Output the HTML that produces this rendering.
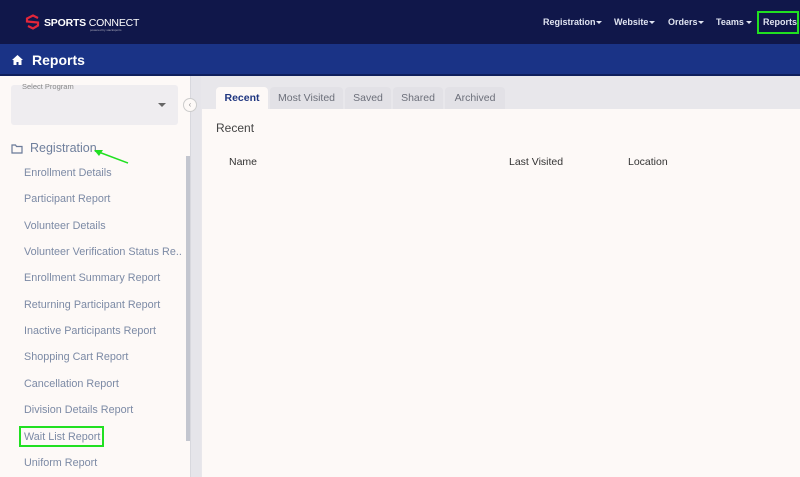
<!DOCTYPE html>
<html><head><style>
*{margin:0;padding:0;box-sizing:border-box}
body{width:800px;height:477px;overflow:hidden;font-family:"Liberation Sans",sans-serif;background:#e8e7eb;position:relative}
.top{position:absolute;left:0;top:0;width:800px;height:44px;background:#10174a}
.nav{position:absolute;top:17px;color:#dfe3f0;font-size:9px;font-weight:bold}
.car{position:absolute;top:21px;border:3px solid transparent;border-top:3px solid #dfe3f0;border-bottom:0}
.bar{position:absolute;left:0;top:44px;width:800px;height:32px;background:#1a3386;border-bottom:2px solid #0f1f5c}
.side{position:absolute;left:0;top:76px;width:190px;height:401px;background:#fdf9f7}
.item{position:absolute;left:24px;font-size:10.8px;color:#7c8aa5;white-space:nowrap}
.tab{position:absolute;top:87px;height:22px;background:#e2e1e6;border-radius:4px 4px 0 0;font-size:10.5px;color:#6c6f7a;text-align:center;line-height:22px}
.card{position:absolute;left:202px;top:109px;width:598px;height:368px;background:#fdf9f7}
.h{position:absolute;font-size:10.5px;color:#333}
</style></head><body>
<div class="top">
<svg style="position:absolute;left:25px;top:14px" width="16" height="16" viewBox="0 0 16 16"><path d="M13 4 L8 1.5 L2 4.5 L2 7.5 L13 8.5 L13 11.5 L8 14.5 L3 12" fill="none" stroke="#e3263a" stroke-width="2.2"/></svg>
<div style="position:absolute;left:44px;top:17px;color:#fff;font-size:10.5px;font-weight:bold;letter-spacing:-0.2px">SPORTS <span style="font-weight:normal">CONNECT</span></div>
<div style="position:absolute;left:90px;top:28px;color:#aab;font-size:3px">powered by stacksports</div>
<div class="nav" style="left:543px">Registration</div><div class="car" style="left:596px"></div>
<div class="nav" style="left:614px">Website</div><div class="car" style="left:649px"></div>
<div class="nav" style="left:668px">Orders</div><div class="car" style="left:698px"></div>
<div class="nav" style="left:716px">Teams</div><div class="car" style="left:746px"></div>
<div style="position:absolute;left:757px;top:11px;width:42px;height:23px;border:2px solid #21e021"></div>
<div class="nav" style="left:763px">Reports</div>
</div>
<div class="bar">
<svg style="position:absolute;left:12px;top:11px" width="11" height="10" viewBox="0 0 11 10"><path d="M5.5 0 L11 5 L9.5 5 L9.5 10 L6.5 10 L6.5 7 L4.5 7 L4.5 10 L1.5 10 L1.5 5 L0 5Z" fill="#fff"/></svg>
<div style="position:absolute;left:32px;top:8px;color:#fff;font-size:14px;font-weight:bold">Reports</div>
</div>
<div class="side">
<div style="position:absolute;left:11px;top:9px;width:167px;height:40px;background:#efedf0;border-radius:3px"></div>
<div style="position:absolute;left:22px;top:6px;font-size:7.5px;color:#888">Select Program</div>
<div style="position:absolute;left:158px;top:27px;border:4px solid transparent;border-top:4px solid #666;border-bottom:0"></div>
<svg style="position:absolute;left:11px;top:68px" width="12" height="10" viewBox="0 0 12 10"><path d="M1 1 H4.5 L5.5 2.5 H11 V9 H1Z" fill="none" stroke="#6a7a99" stroke-width="1.2"/></svg>
<div style="position:absolute;left:30px;top:65px;font-size:12.5px;color:#6f7f9c">Registration</div>
<svg style="position:absolute;left:92px;top:70px" width="40" height="20"><path d="M36 17 L4 5" stroke="#21e021" stroke-width="1.5"/><path d="M2 4 L11 4 L7 10Z" fill="#21e021"/></svg>
<div style="position:absolute;left:186px;top:80px;width:4px;height:285px;background:#c3c6cf"></div>
</div>
<div class="item" style="top:167px">Enrollment Details</div>
<div class="item" style="top:193px">Participant Report</div>
<div class="item" style="top:220px">Volunteer Details</div>
<div class="item" style="top:246px;width:158px;overflow:hidden">Volunteer Verification Status Re...</div>
<div class="item" style="top:272px">Enrollment Summary Report</div>
<div class="item" style="top:299px">Returning Participant Report</div>
<div class="item" style="top:325px">Inactive Participants Report</div>
<div class="item" style="top:351px">Shopping Cart Report</div>
<div class="item" style="top:378px">Cancellation Report</div>
<div class="item" style="top:404px">Division Details Report</div>
<div style="position:absolute;left:19px;top:426px;width:85px;height:21px;border:2px solid #21e021"></div>
<div class="item" style="top:431px">Wait List Report</div>
<div class="item" style="top:457px">Uniform Report</div>
<div style="position:absolute;left:190px;top:76px;width:11px;height:401px;background:#e6e5ea;border-left:1px solid #d8d8de"></div>
<div style="position:absolute;left:183px;top:98px;width:14px;height:14px;border-radius:50%;background:#fdf9f7;border:1px solid #ccc;font-size:8px;color:#999;text-align:center;line-height:12px">‹</div>
<div class="tab" style="left:216px;width:52px;background:#fdf9f7;color:#1f3680;font-weight:bold">Recent</div>
<div class="tab" style="left:270px;width:73px">Most Visited</div>
<div class="tab" style="left:345px;width:46px">Saved</div>
<div class="tab" style="left:393px;width:50px">Shared</div>
<div class="tab" style="left:445px;width:60px">Archived</div>
<div class="card"></div>
<div style="position:absolute;left:216px;top:121px;font-size:12px;color:#444">Recent</div>
<div class="h" style="left:229px;top:156px">Name</div>
<div class="h" style="left:509px;top:156px">Last Visited</div>
<div class="h" style="left:628px;top:156px">Location</div>
</body></html>
